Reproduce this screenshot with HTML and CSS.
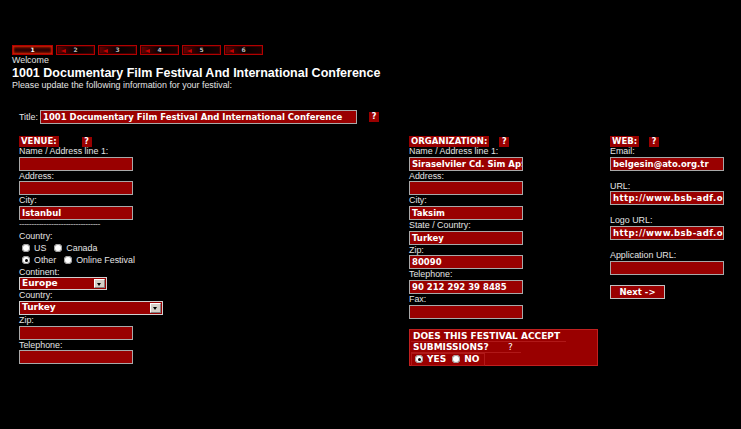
FILE: index.html
```html
<!DOCTYPE html>
<html>
<head>
<meta charset="utf-8">
<link rel="stylesheet" href="styles.css">
</head>
<body>
<div class="steps">
  <div class="step active"><span>1</span></div>
  <div class="step"><span>2</span></div>
  <div class="step"><span>3</span></div>
  <div class="step"><span>4</span></div>
  <div class="step"><span>5</span></div>
  <div class="step"><span>6</span></div>
</div>
<div class="welcome">Welcome</div>
<h1>1001 Documentary Film Festival And International Conference</h1>
<div class="intro">Please update the following information for your festival:</div>

<div class="form">
  <div class="title-row">
    <span class="title-lbl">Title:</span>
    <div class="field title-field">1001 Documentary Film Festival And International Conference</div>
    <span class="help title-help">?</span>
  </div>

  <div class="cols">
    <div class="col">
      <div class="head venue-head"><span class="tag">VENUE:</span><span class="help">?</span></div>
      <div class="lbl">Name / Address line 1:</div>
      <div class="field"></div>
      <div class="lbl">Address:</div>
      <div class="field"></div>
      <div class="lbl">City:</div>
      <div class="field">Istanbul</div>
      <div class="sep">---------------------------------</div>
      <div class="lbl">Country:</div>
      <div class="radios r1"><span class="radio"></span><span class="rl">US</span><span class="radio"></span><span>Canada</span></div>
      <div class="radios r2"><span class="radio on"></span><span class="rl">Other</span><span class="radio"></span><span>Online Festival</span></div>
      <div class="lbl">Continent:</div>
      <div class="select sel-cont"><span class="val">Europe</span><span class="btn"></span></div>
      <div class="lbl">Country:</div>
      <div class="select sel-country"><span class="val">Turkey</span><span class="btn"></span></div>
      <div class="lbl">Zip:</div>
      <div class="field"></div>
      <div class="lbl">Telephone:</div>
      <div class="field"></div>
    </div>

    <div class="col">
      <div class="head"><span class="tag">ORGANIZATION:</span><span class="help">?</span></div>
      <div class="lbl">Name / Address line 1:</div>
      <div class="field">Siraselviler Cd. Sim Ap$</div>
      <div class="lbl">Address:</div>
      <div class="field"></div>
      <div class="lbl">City:</div>
      <div class="field">Taksim</div>
      <div class="lbl">State / Country:</div>
      <div class="field">Turkey</div>
      <div class="lbl">Zip:</div>
      <div class="field">80090</div>
      <div class="lbl">Telephone:</div>
      <div class="field">90 212 292 39 8485</div>
      <div class="lbl">Fax:</div>
      <div class="field"></div>
      <div class="accept">
        <div class="acc-line acc-1">DOES THIS FESTIVAL ACCEPT</div>
        <div class="acc-line acc-2">SUBMISSIONS? <span class="acc-q">?</span></div>
        <div class="acc-opts"><span class="radio on"></span><span class="rl">YES</span><span class="radio"></span><span>NO</span></div>
      </div>
    </div>

    <div class="col">
      <div class="head"><span class="tag">WEB:</span><span class="help">?</span></div>
      <div class="lbl">Email:</div>
      <div class="field">belgesin@ato.org.tr</div>
      <div class="gap"></div>
      <div class="lbl">URL:</div>
      <div class="field url">http://www.bsb-adf.org</div>
      <div class="gap"></div>
      <div class="lbl">Logo URL:</div>
      <div class="field url">http://www.bsb-adf.org</div>
      <div class="gap"></div>
      <div class="lbl">Application URL:</div>
      <div class="field"></div>
      <div class="gap"></div>
      <div class="next">Next -&gt;</div>
    </div>
  </div>
</div>
</body>
</html>
```
FILE: styles.css
```css
* { box-sizing: border-box; margin: 0; padding: 0; }

body {
  background: #000;
  color: #e4e4e4;
  font-family: "Liberation Sans", Arial, sans-serif;
  font-size: 8.9px;
  line-height: 10px;
  padding: 45px 0 0 12px;
}

.steps { display: flex; gap: 3px; height: 10px; }
.step {
  position: relative;
  width: 39px;
  height: 10px;
  border: 1px solid #b30000;
  box-shadow: inset 0 0 0 1px #3a0000;
  background: linear-gradient(90deg, #6a0000 0, #2a0000 30%, #050000 55%, #1a0000 100%);
  display: flex;
  align-items: center;
  justify-content: center;
  font: bold 6px/6px "DejaVu Sans", sans-serif;
  color: #bbb;
}
.step::before {
  content: "";
  position: absolute;
  left: 4px;
  top: 2.5px;
  border-right: 5px solid #c00000;
  border-top: 2px solid transparent;
  border-bottom: 2px solid transparent;
}
.step.active {
  width: 41px;
  background: linear-gradient(180deg, #5a0a00 0, #2a0000 50%, #5a0a00 100%);
  box-shadow: inset 0 0 2px 1px #d22200;
  color: #fff;
}
.step.active::before { display: none; }

.welcome { line-height: 10px; }
h1 {
  font-size: 12.5px;
  line-height: 14px;
  font-weight: bold;
  color: #fff;
  margin-top: 1px;
}
.intro { line-height: 10px; }

.form { padding-left: 7px; margin-top: 20px; }

.title-row { display: flex; align-items: center; height: 14px; }
.title-lbl { width: 21px; flex: none; }
.title-row .title-field { width: 317px; flex: none; }
.title-help { margin-left: 12px; flex: none; }

.cols {
  display: grid;
  grid-template-columns: 390px 201px 131px;
  margin-top: 12px;
}

.head { display: flex; align-items: flex-start; gap: 10px; height: 10px; }
.venue-head { gap: 23px; }
.tag {
  background: #990000;
  color: #fff;
  font: bold 8.5px/11px "DejaVu Sans", Verdana, sans-serif;
  padding: 0 2px;
  height: 11px;
}
.help {
  width: 10px;
  height: 10px;
  background: #990000;
  color: #fff;
  font: bold 8px/10px "DejaVu Sans", Verdana, sans-serif;
  text-align: center;
}
.head .help { margin-top: 1px; }

.lbl { height: 10.67px; line-height: 10.67px; white-space: nowrap; }

.field {
  width: 114px;
  height: 14px;
  border: 1px solid #a8a8a8;
  background: #990000;
  color: #fff;
  font: bold 8.5px/12px "DejaVu Sans", Verdana, sans-serif;
  padding-left: 2px;
  overflow: hidden;
  white-space: nowrap;
}
.field.url { letter-spacing: 0.45px; }

.sep {
  height: 11px;
  line-height: 9px;
  color: #bbb;
  white-space: nowrap;
  overflow: hidden;
  width: 95px;
  letter-spacing: -0.5px;
}

.radios { display: flex; align-items: center; padding-left: 3px; }
.r1 { height: 12px; }
.r2 { height: 13px; }
.radio {
  width: 8px;
  height: 8px;
  border-radius: 50%;
  background: #fff;
  box-shadow: inset 0 0 0 1px #9a9a9a;
  margin-right: 4px;
  position: relative;
  flex: none;
}
.radio.on::after {
  content: "";
  position: absolute;
  left: 2.5px;
  top: 2.5px;
  width: 3px;
  height: 3px;
  border-radius: 50%;
  background: #000;
}
.rl { margin-right: 8px; }

.select {
  display: flex;
  height: 13px;
  border: 1px solid #d0d0d0;
  background: #990000;
  color: #fff;
  font: bold 9px/11px "DejaVu Sans", Verdana, sans-serif;
}
.sel-cont { width: 88px; }
.sel-country { width: 144px; height: 14px; }
.select .val { flex: 1; padding-left: 2px; }
.select .btn {
  width: 11px;
  margin: 1px;
  background: #d4d0c8;
  border: 1px solid;
  border-color: #fff #808080 #808080 #fff;
  position: relative;
}
.select .btn::after {
  content: "";
  position: absolute;
  left: 2px;
  top: 3px;
  border-top: 3px solid #000;
  border-left: 2.5px solid transparent;
  border-right: 2.5px solid transparent;
}

.accept {
  margin-top: 10px;
  width: 189px;
  height: 37px;
  background: #990000;
  border: 1px solid #c02020;
  color: #fff;
  font: bold 9px/11px "DejaVu Sans", Verdana, sans-serif;
  padding: 1px 0 0 1px;
}
.acc-line { padding-left: 2px; height: 11px; }
.acc-1 { width: 155px; border-bottom: 1px solid #b01818; }
.acc-2 { width: 110px; border-bottom: 1px solid #b01818; }
.acc-q { margin-left: 16px; font-weight: normal; }
.acc-opts {
  display: flex;
  align-items: center;
  width: 74px;
  height: 13px;
  padding-left: 3px;
  border: 1px solid #b01818;
}
.acc-opts .rl { margin-right: 6px; }

.gap { height: 10px; }

.next {
  width: 55px;
  height: 14px;
  border: 1px solid #c0c0c0;
  background: #990000;
  color: #fff;
  font: bold 8.5px/12px "DejaVu Sans", Verdana, sans-serif;
  text-align: center;
}
```
